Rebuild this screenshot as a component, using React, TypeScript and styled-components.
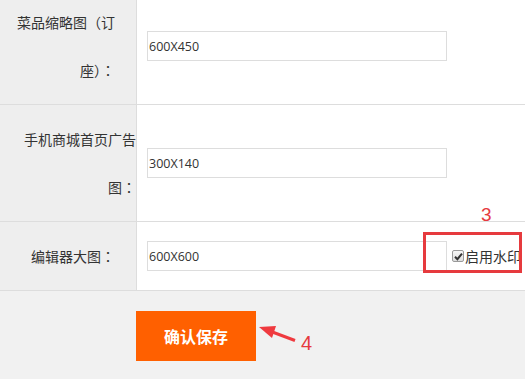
import React from "react";
import styled, { createGlobalStyle } from "styled-components";

const Global = createGlobalStyle`
  html, body { margin: 0; padding: 0; background: #f1f1f1; overflow: hidden; }
  body { font-family: "Noto Sans CJK SC", "Liberation Sans", sans-serif; color: #333; }
`;

const Page = styled.div`
  position: relative;
  width: 525px;
  height: 379px;
  overflow: hidden;
  background: #f1f1f1;
`;

const Form = styled.div`
  margin-top: -12px;
  background: #fff;
`;

const Row = styled.div`
  display: grid;
  grid-template-columns: 137px 1fr;
  border-bottom: 1px solid #dddddd;
`;

const Label = styled.div<{ $pr: number }>`
  background: #eeeeee;
  border-right: 1px solid #dddddd;
  padding: 10px ${(p) => p.$pr}px 10px 0;
  text-align: right;
  font-size: 14px;
  line-height: 48px;
  color: #333;
  white-space: nowrap;
`;

const Line = styled.div``;

const Colon = styled.span`
  font-family: "Noto Sans CJK TC", sans-serif;
`;

const Value = styled.div`
  display: flex;
  align-items: center;
  padding-left: 10px;
  background: #fff;
`;

const Input = styled.input`
  box-sizing: border-box;
  width: 300px;
  height: 30px;
  border: 1px solid #dddddd;
  padding: 0 0 0 1px;
  margin: 0;
  font-family: "Open Sans", "Liberation Sans", sans-serif;
  font-size: 12.5px;
  color: #333;
  outline: none;
  background: #fff;
`;

const CheckWrap = styled.label`
  display: flex;
  align-items: center;
  margin-left: 5px;
  font-size: 14px;
  color: #333;
  white-space: nowrap;
`;

const Box = styled.span`
  box-sizing: border-box;
  width: 12px;
  height: 12px;
  border: 1px solid #9a9a9a;
  border-radius: 2px;
  background: linear-gradient(#f6f6f6, #dedede);
  display: flex;
  align-items: center;
  justify-content: center;
  margin-right: 1px;
`;

const Bottom = styled.div`
  padding: 20px 0 0 136px;
`;

const SaveButton = styled.button`
  width: 120px;
  height: 50px;
  border: none;
  margin: 0;
  background: #ff6000;
  color: #fff;
  font-family: "Noto Sans CJK SC", sans-serif;
  font-size: 16px;
  font-weight: bold;
  cursor: pointer;
`;

const Highlight = styled.div`
  position: absolute;
  left: 423px;
  top: 232px;
  width: 99px;
  height: 41px;
  box-sizing: border-box;
  border: 3px solid #e63a3e;
`;

const Mark = styled.div<{ $x: number; $y: number; $size: number }>`
  position: absolute;
  left: ${(p) => p.$x}px;
  top: ${(p) => p.$y}px;
  font-family: "Liberation Sans", sans-serif;
  font-size: ${(p) => p.$size}px;
  line-height: 1;
  color: #e63a3e;
`;

const Arrow = styled.svg`
  position: absolute;
  left: 255px;
  top: 320px;
`;

type Field = {
  lines: string[];
  pr: number;
  value: string;
  check?: boolean;
};

const fields: Field[] = [
  { lines: ["菜品缩略图（订", "座）"], pr: 21, value: "600X450" },
  { lines: ["手机商城首页广告", "图"], pr: 0, value: "300X140" },
  { lines: ["编辑器大图"], pr: 21, value: "600X600", check: true },
];

export default function App() {
  return (
    <Page>
      <Global />
      <Form>
        {fields.map((f) => (
          <Row key={f.value}>
            <Label $pr={f.pr}>
              {f.lines.map((l, i) => (
                <Line key={l}>
                  {l}
                  {i === f.lines.length - 1 && <Colon>：</Colon>}
                </Line>
              ))}
            </Label>
            <Value>
              <Input defaultValue={f.value} />
              {f.check && (
                <CheckWrap>
                  <Box>
                    <svg width="9" height="9" viewBox="0 0 9 9">
                      <path d="M1 4.8 L3.4 7.2 L8 1.6" fill="none" stroke="#333" strokeWidth="2" />
                    </svg>
                  </Box>
                  启用水印
                </CheckWrap>
              )}
            </Value>
          </Row>
        ))}
      </Form>
      <Bottom>
        <SaveButton>确认保存</SaveButton>
      </Bottom>
      <Highlight />
      <Mark $x={481} $y={205} $size={19}>3</Mark>
      <Mark $x={301} $y={333} $size={20}>4</Mark>
      <Arrow width="45" height="26" viewBox="0 0 45 26">
        <line x1="16" y1="11.5" x2="40" y2="20.5" stroke="#ef3a3f" strokeWidth="3" />
        <polygon points="4,7 17,18 21,6" fill="#ef3a3f" />
      </Arrow>
    </Page>
  );
}
